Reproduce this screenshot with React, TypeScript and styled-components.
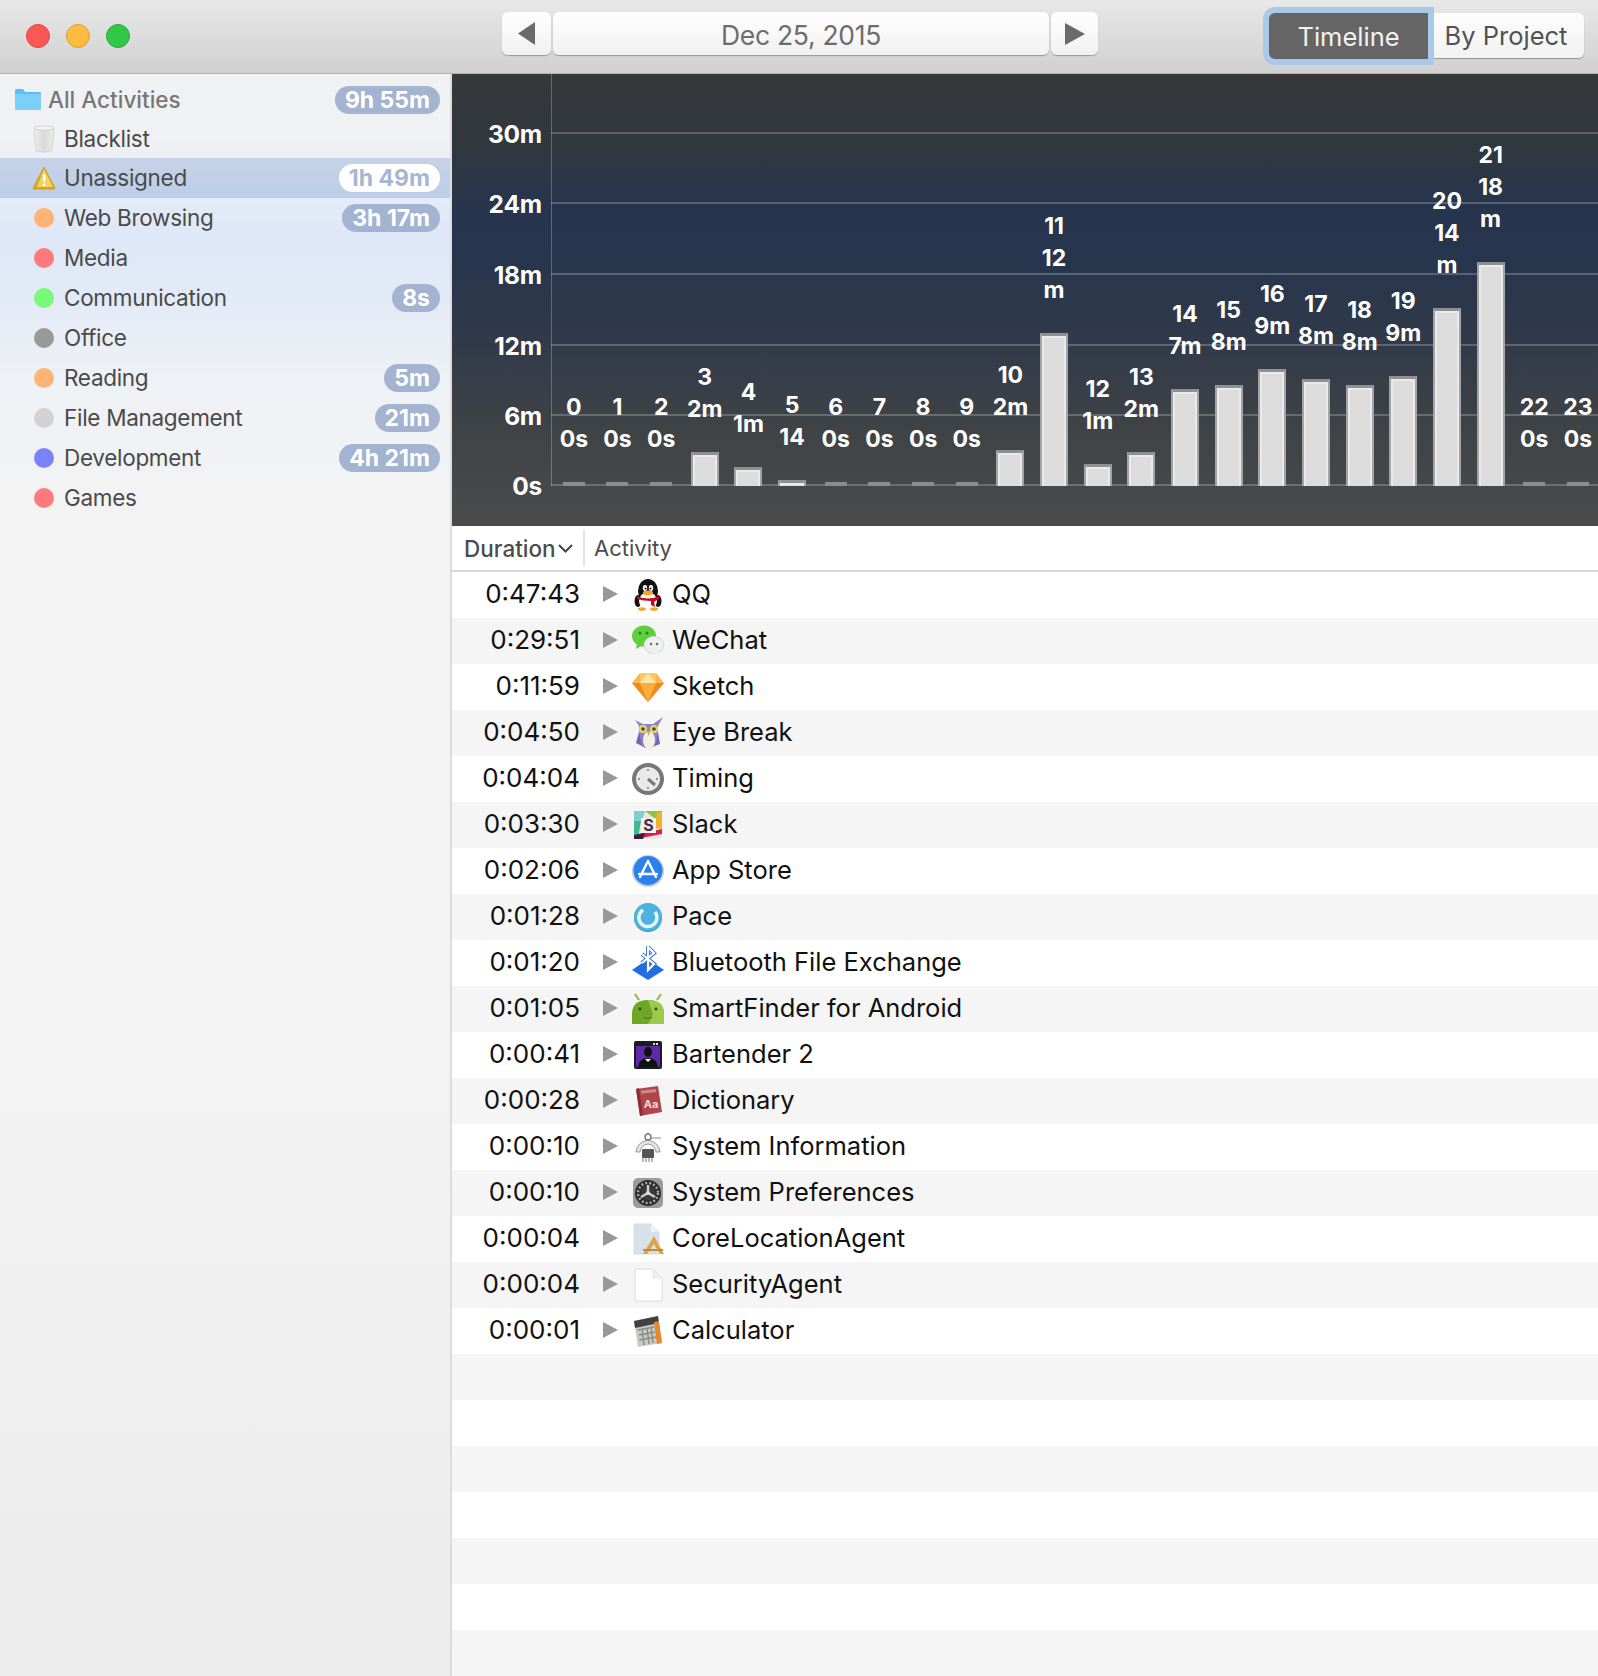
import React from "react";
import styled, { createGlobalStyle } from "styled-components";

const GlobalStyle = createGlobalStyle`
  html, body {
    margin: 0;
    padding: 0;
    background: #fff;
  }
  * {
    box-sizing: border-box;
  }
  body {
    font-family: Inter, "Liberation Sans", sans-serif;
    -webkit-font-smoothing: antialiased;
  }
`;

const Window = styled.div`
  width: 1598px;
  height: 1676px;
  display: flex;
  flex-direction: column;
  overflow: hidden;
`;

const TitleBar = styled.div`
  height: 74px;
  flex: none;
  display: grid;
  grid-template-columns: 502px 596px 1fr;
  align-items: start;
  background: linear-gradient(#e9e8e9, #d1d0d1);
  border-bottom: 1px solid #b4b4b4;
`;

const Lights = styled.div`
  display: flex;
  gap: 16px;
  padding: 24px 0 0 26px;
`;

const Light = styled.div<{ $color: string; $edge: string }>`
  width: 24px;
  height: 24px;
  border-radius: 50%;
  background: ${(p) => p.$color};
  border: 1px solid ${(p) => p.$edge};
`;

const Pager = styled.div`
  display: grid;
  grid-template-columns: 49px 1fr 47px;
  gap: 2px;
  padding-top: 12px;
`;

const PagerButton = styled.div`
  height: 43px;
  display: flex;
  align-items: center;
  justify-content: center;
  background: linear-gradient(#ffffff, #f1f1f1);
  border-radius: 6px;
  box-shadow: 0 1px 1px rgba(0, 0, 0, 0.3);
`;

const DateText = styled.div`
  margin-top: 2px;
  color: #6d6d6d;
  font-size: 26.5px;
  letter-spacing: -0.3px;
`;

const Segments = styled.div`
  display: flex;
  justify-content: flex-end;
  padding: 13px 14px 0 0;
`;

const SegmentOn = styled.div`
  width: 159px;
  height: 46px;
  display: flex;
  align-items: center;
  justify-content: center;
  background: #656565;
  color: #f2f2f2;
  font-size: 25.5px;
  border-radius: 6px 0 0 6px;
  box-shadow: 0 0 0 6px #aac8ea;
  position: relative;
  z-index: 1;
`;

const SegmentOff = styled.div`
  width: 156px;
  height: 45px;
  display: flex;
  align-items: center;
  justify-content: center;
  background: linear-gradient(#fdfdfd, #f2f2f2);
  color: #525252;
  font-size: 25.5px;
  border-radius: 0 6px 6px 0;
  box-shadow: 0 1px 1px rgba(0, 0, 0, 0.3);
`;

const Body = styled.div`
  flex: 1;
  display: flex;
  min-height: 0;
`;

const Sidebar = styled.div`
  width: 452px;
  flex: none;
  padding-top: 6px;
  border-right: 2px solid #dcdcdc;
  background: linear-gradient(
    #f1f1f2 0%,
    #eff1f4 4%,
    #dfe8f8 10%,
    #e3eaf7 14%,
    #e9eef6 16.5%,
    #eef1f5 19%,
    #f1f2f4 24%,
    #f3f3f3 27%,
    #f3f3f3 60%,
    #ececec 100%
  );
`;

const SideRow = styled.div<{ $selected?: boolean; $top?: boolean; $short?: boolean }>`
  height: ${(p) => (p.$short ? "38px" : "40px")};
  display: flex;
  align-items: center;
  padding: 0 10px 0 ${(p) => (p.$top ? "14px" : "32px")};
  background: ${(p) => (p.$selected ? "linear-gradient(#c6d2e6, #bccee9)" : "transparent")};
`;

const SideIcon = styled.div<{ $top?: boolean }>`
  width: ${(p) => (p.$top ? "34px" : "32px")};
  flex: none;
  display: flex;
  align-items: center;
  justify-content: flex-start;
`;

const Dot = styled.div<{ $color: string }>`
  width: 20px;
  height: 20px;
  margin-left: 2px;
  border-radius: 50%;
  background: ${(p) => p.$color};
`;

const SideLabel = styled.div<{ $muted?: boolean }>`
  flex: 1;
  margin-top: -1px;
  font-size: 22.5px;
  letter-spacing: ${(p) => (p.$muted ? "0" : "-0.3px")};
  font-weight: ${(p) => (p.$muted ? 500 : 400)};
  color: ${(p) => (p.$muted ? "#777777" : "#4a4a4a")};
`;

const Badge = styled.div<{ $inverse?: boolean }>`
  height: 28px;
  padding: 0 10px;
  display: flex;
  align-items: center;
  border-radius: 14px;
  font-size: 23px;
  font-weight: 700;
  color: ${(p) => (p.$inverse ? "#a6b6d3" : "#fff")};
  background: ${(p) => (p.$inverse ? "#fff" : "#a4b3d0")};
`;

const Main = styled.div`
  flex: 1;
  min-width: 0;
  display: flex;
  flex-direction: column;
`;

const Chart = styled.div`
  height: 452px;
  flex: none;
  padding: 0 0 40px 99px;
  display: flex;
  background: linear-gradient(
    #363839 0%,
    #30373f 16%,
    #26344e 31%,
    #27354d 42%,
    #323a4a 60%,
    #3f4346 78%,
    #4a4a4a 100%
  );
`;

const Plot = styled.div`
  flex: 1;
  position: relative;
  display: grid;
  grid-template-columns: repeat(24, 43.66px);
  align-items: end;
  border-left: 1px solid rgba(255, 255, 255, 0.25);
`;

const GridLine = styled.div<{ $y: number }>`
  position: absolute;
  left: -1px;
  right: 0;
  bottom: ${(p) => p.$y}px;
  height: 2px;
  background: rgba(255, 255, 255, 0.22);
`;

const AxisLabel = styled.div`
  position: absolute;
  top: -13px;
  right: 100%;
  width: 80px;
  margin-right: 9px;
  text-align: right;
  color: #fff;
  font-size: 24.5px;
  font-weight: 700;
  letter-spacing: -0.2px;
  line-height: 30px;
`;

const Column = styled.div`
  position: relative;
  display: flex;
  flex-direction: column;
  align-items: center;
`;

const BarLabel = styled.div`
  width: 100%;
  margin-bottom: 27px;
  text-align: center;
  color: #fff;
  font-size: 23px;
  font-weight: 700;
  line-height: 32px;
`;

const LabelLine = styled.div`
  word-break: break-all;
`;

const Bar = styled.div<{ $empty: boolean }>`
  width: ${(p) => (p.$empty ? "22px" : "28px")};
  background: ${(p) => (p.$empty ? "#8c8d8e" : "#dcdcdc")};
  ${(p) =>
    !p.$empty &&
    `
    border-top: 3px solid #8f9091;
    border-left: 2px solid #a3a4a5;
    border-right: 2px solid #a3a4a5;
    box-shadow: inset 2px 2px 0 #eaeaea, inset -2px 0 0 #eaeaea;
  `}
`;

const HeaderRow = styled.div`
  height: 46px;
  flex: none;
  display: flex;
  align-items: center;
  background: #fff;
  border-bottom: 2px solid #d8d8d8;
  color: #4c4c4c;
  font-size: 22px;
`;

const DurationHead = styled.div`
  width: 133px;
  height: 36px;
  padding-left: 12px;
  display: flex;
  align-items: center;
  gap: 2px;
  border-right: 2px solid #e4e4e4;
  font-size: 22.5px;
  font-weight: 500;
`;

const ActivityHead = styled.div`
  padding-left: 9px;
`;

const List = styled.div`
  flex: 1;
  min-height: 0;
`;

const Row = styled.div<{ $alt: boolean }>`
  height: 46px;
  display: flex;
  align-items: center;
  background: ${(p) => (p.$alt ? "#f5f5f5" : "#fff")};
  color: #111;
  font-size: 25.5px;
`;

const Duration = styled.div`
  width: 128px;
  text-align: right;
  margin-top: -4px;
  font-size: 26px;
`;

const Disclosure = styled.div`
  width: 0;
  height: 0;
  margin: -3px 0 0 23px;
  border-left: 15px solid #999;
  border-top: 8px solid transparent;
  border-bottom: 8px solid transparent;
`;

const AppIcon = styled.div`
  width: 34px;
  height: 34px;
  margin-left: 13px;
  flex: none;
`;

const AppName = styled.div`
  margin: -3px 0 0 7px;
`;

const Svg: React.FC<{ children: React.ReactNode }> = ({ children }) => (
  <svg width="34" height="34" viewBox="0 0 34 34" style={{ display: "block" }}>
    {children}
  </svg>
);

const QQIcon = () => (
  <Svg>
    <ellipse cx="17" cy="13" rx="10" ry="12" fill="#111" />
    <ellipse cx="7" cy="23" rx="3.5" ry="6" fill="#111" />
    <ellipse cx="27" cy="23" rx="3.5" ry="6" fill="#111" />
    <ellipse cx="17" cy="23" rx="9" ry="9" fill="#fff" />
    <ellipse cx="14" cy="10" rx="2.2" ry="3" fill="#fff" />
    <ellipse cx="20" cy="10" rx="2.2" ry="3" fill="#fff" />
    <circle cx="14.5" cy="10.5" r="1" fill="#111" />
    <circle cx="19.5" cy="10.5" r="1" fill="#111" />
    <ellipse cx="17" cy="15" rx="5" ry="2.4" fill="#f5a623" />
    <path d="M6 18 Q17 23 28 18 L28 21 Q24 23 23 24 L24 29 L20 27 L20 23 Q12 23 6 21 Z" fill="#d0021b" />
    <ellipse cx="11" cy="31" rx="4" ry="1.8" fill="#f5a623" />
    <ellipse cx="23" cy="31" rx="4" ry="1.8" fill="#f5a623" />
  </Svg>
);

const WeChatIcon = () => (
  <Svg>
    <ellipse cx="13" cy="12" rx="12" ry="10.5" fill="#5fcf3c" />
    <path d="M6 19 L5 25 L12 21 Z" fill="#5fcf3c" />
    <circle cx="9" cy="9" r="1.5" fill="#2e7f1c" />
    <circle cx="16" cy="9" r="1.5" fill="#2e7f1c" />
    <ellipse cx="23" cy="21" rx="10" ry="8.5" fill="#eef0f0" stroke="#d5d8d8" />
    <path d="M27 27 L30 32 L22 29 Z" fill="#eef0f0" />
    <circle cx="20" cy="20" r="1.2" fill="#666" />
    <circle cx="26" cy="20" r="1.2" fill="#666" />
  </Svg>
);

const SketchIcon = () => (
  <Svg>
    <path d="M9 3 H25 L33 13 L17 32 L1 13 Z" fill="#fdb84a" />
    <path d="M1 13 H33 L17 32 Z" fill="#ee8a1f" />
    <path d="M9 13 H25 L17 32 Z" fill="#fbae3a" />
    <path d="M9 3 L9 13 H25 L25 3 Z" fill="#fdc65e" />
    <path d="M17 3 L9 13 H25 Z" fill="#fee3a6" />
  </Svg>
);

const OwlIcon = () => (
  <Svg>
    <path d="M4 4 L12 8 H22 L32 1 L27 10 L27 26 Q24 32 17 32 Q10 32 8 26 L8 10 Z" fill="#8c86c9" />
    <ellipse cx="18" cy="24" rx="6" ry="9" fill="#f2efe6" />
    <circle cx="12" cy="13" r="4" fill="#e8d26a" />
    <circle cx="23" cy="13" r="4" fill="#e8d26a" />
    <circle cx="12" cy="13" r="1.8" fill="#444" />
    <circle cx="23" cy="13" r="1.8" fill="#444" />
    <path d="M16 15 L19 15 L17.5 20 Z" fill="#e0a030" />
    <path d="M8 16 L5 27 L11 30 Z" fill="#6e68b5" />
    <path d="M27 16 L29 28 L24 30 Z" fill="#6e68b5" />
  </Svg>
);

const TimingIcon = () => (
  <Svg>
    <circle cx="17" cy="17" r="16" fill="#777777" />
    <circle cx="17" cy="17" r="12" fill="#e9e9e9" />
    <circle cx="17" cy="8" r="1" fill="#777" />
    <circle cx="8" cy="17" r="1" fill="#777" />
    <circle cx="26" cy="17" r="1" fill="#777" />
    <circle cx="17" cy="26" r="1" fill="#777" />
    <path d="M17 17 L24 23" stroke="#777" strokeWidth="3" />
  </Svg>
);

const SlackIcon = () => (
  <Svg>
    <rect x="3" y="3" width="28" height="28" rx="2" fill="#e8e8e0" />
    <path d="M3 3 H14 L11 13 H3 Z" fill="#7fd0cc" />
    <path d="M14 3 H31 V11 L26 12 Z" fill="#8cc63f" />
    <path d="M26 4 H31 V21 L24 20 Z" fill="#edb431" />
    <path d="M3 13 H10 L7 31 H3 Z" fill="#3eb890" />
    <path d="M7 26 L31 21 V26 L5 31 Z" fill="#d81c5c" />
    <path d="M3 27 L14 25 L12 31 H3 Z" fill="#3d1c3c" />
    <rect x="10" y="10" width="15" height="15" fill="#f4f1ea" />
    <text x="17.5" y="23" textAnchor="middle" fontSize="16" fontWeight="700" fill="#4a2b4a" fontFamily="Inter, sans-serif">S</text>
  </Svg>
);

const AppStoreIcon = () => (
  <Svg>
    <circle cx="17" cy="17" r="16" fill="#c9ccd0" />
    <circle cx="17" cy="16.5" r="14.5" fill="#2a80ee" />
    <path d="M17 7 L9 23 M17 7 L25 23 M8 20 H26" stroke="#fff" strokeWidth="2.4" fill="none" strokeLinecap="round" />
  </Svg>
);

const PaceIcon = () => (
  <Svg>
    <circle cx="17" cy="18" r="14" fill="#2e97c6" />
    <circle cx="17" cy="17" r="14" fill="#4db2dc" />
    <path d="M12 10 A9 9 0 1 0 24 12" stroke="#e4f5fb" strokeWidth="3.5" fill="none" />
  </Svg>
);

const BluetoothIcon = () => (
  <Svg>
    <path d="M1 24 L17 13 L33 24 L17 34 Z" fill="#1f6fe0" />
    <path d="M11 8 L23 18 L17 24 V1 L23 7 L11 17" stroke="#2a6fd6" strokeWidth="4" fill="none" />
    <path d="M11 8 L23 18 L17 24 V1 L23 7 L11 17" stroke="#fff" strokeWidth="2.2" fill="none" />
  </Svg>
);

const AndroidIcon = () => (
  <Svg>
    <path d="M8 8 L4 2 M26 8 L30 2" stroke="#8fb93a" strokeWidth="2" />
    <path d="M1 32 V22 Q1 8 17 8 Q33 8 33 22 V32 Z" fill="#6fa626" />
    <path d="M17 8 Q33 8 33 22 V32 H17 L22 22 Z" fill="#9bc94c" />
    <circle cx="9" cy="17" r="1.4" fill="#2d4a10" />
    <circle cx="25" cy="17" r="1.4" fill="#2d4a10" />
    <path d="M13 25 Q17 28 21 25" stroke="#4c7d18" strokeWidth="1.2" fill="none" />
  </Svg>
);

const BartenderIcon = () => (
  <Svg>
    <rect x="3" y="3" width="28" height="28" rx="2" fill="#1c1c1e" />
    <rect x="5" y="8" width="24" height="21" fill="#5d2aa8" />
    <rect x="22" y="5" width="2" height="2" fill="#ddd" />
    <rect x="25" y="5" width="2" height="2" fill="#ddd" />
    <ellipse cx="17" cy="14" rx="4" ry="5" fill="#111" />
    <path d="M7 29 Q8 20 17 20 Q26 20 27 29 Z" fill="#111" />
    <path d="M14 21 L17 24 L20 21 Z" fill="#fff" />
  </Svg>
);

const DictionaryIcon = () => (
  <Svg>
    <path d="M5 5 L27 2 L31 28 L9 32 Z" fill="#b0464c" />
    <path d="M5 5 L8 4 L12 31 L9 32 Z" fill="#8c2f35" />
    <rect x="10" y="6" width="15" height="3" fill="#cf8a8c" transform="rotate(-7 17 7)" />
    <text x="20" y="24" textAnchor="middle" fontSize="11" fontWeight="700" fill="#efd9d9" fontFamily="Inter, sans-serif">Aa</text>
  </Svg>
);

const SysInfoIcon = () => (
  <Svg>
    <path d="M5 22 Q6 12 17 10 Q28 12 29 22 L25 22 Q24 15 17 14 Q10 15 9 22 Z" fill="#e2e2e2" stroke="#888" strokeWidth="0.8" />
    <circle cx="17" cy="7" r="3" fill="none" stroke="#777" strokeWidth="1.4" />
    <path d="M17 2 V5 M20 8 H30" stroke="#888" strokeWidth="1" />
    <rect x="11" y="19" width="12" height="9" rx="1" fill="#555" />
    <path d="M12 28 V32 M15 28 V32 M18 28 V32 M21 28 V32" stroke="#777" strokeWidth="1" />
  </Svg>
);

const SysPrefIcon = () => (
  <Svg>
    <rect x="2" y="2" width="30" height="30" rx="5" fill="#9a9a9a" />
    <circle cx="17" cy="17" r="13" fill="#2a2a2a" />
    <circle cx="17" cy="17" r="10" fill="none" stroke="#aaa" strokeWidth="2.5" strokeDasharray="2 2" />
    <circle cx="17" cy="17" r="7.5" fill="#3a3a3a" />
    <path d="M17 17 L17 9 M17 17 L24 21 M17 17 L10 21" stroke="#d0d0d0" strokeWidth="2.4" />
    <circle cx="17" cy="17" r="2" fill="#ddd" />
  </Svg>
);

const CoreLocationIcon = () => (
  <Svg>
    <path d="M3 2 H20 L28 10 V32 H3 Z" fill="#d5e2ec" stroke="#d9d9d9" />
    <path d="M20 2 L28 10 H20 Z" fill="#f1f1f1" />
    <path d="M12 32 L23 14 L33 32 L29 32 L23 22 L16 32 Z" fill="#d9a441" />
    <path d="M12 28 H32" stroke="#c68b2c" strokeWidth="2" />
  </Svg>
);

const DocIcon = () => (
  <Svg>
    <path d="M4 1 H22 L31 10 V33 H4 Z" fill="#fff" stroke="#dcdcdc" />
    <path d="M22 1 L31 10 H22 Z" fill="#efefef" stroke="#dcdcdc" strokeWidth="0.6" />
  </Svg>
);

const CalculatorIcon = () => (
  <Svg>
    <path d="M3 7 L27 2 L31 29 L7 33 Z" fill="#c9c9c4" />
    <path d="M3 7 L27 2 L28 9 L4 14 Z" fill="#3e4042" />
    <path d="M23 8 L28 7 L31 29 L26 30 Z" fill="#e28a2d" />
    <path d="M7 16 L23 13 M8 21 L24 18 M8.5 26 L25 23 M11 15 L13 31 M16 14 L18 30 M20 13 L22 29" stroke="#8b8b86" strokeWidth="1.4" />
  </Svg>
);

const FolderIcon = () => (
  <svg width="28" height="22" viewBox="0 0 28 22" style={{ display: "block" }}>
    <path d="M1 2 Q1 0 3 0 H9 L11 3 H26 Q27 3 27 4 V20 Q27 21 26 21 H2 Q1 21 1 20 Z" fill="#5cbdf0" />
    <path d="M1 5 H27 V20 Q27 21 26 21 H2 Q1 21 1 20 Z" fill="#7cd0f8" />
  </svg>
);

const TrashIcon = () => (
  <svg width="24" height="28" viewBox="0 0 24 28" style={{ display: "block" }}>
    <defs>
      <linearGradient id="glass" x1="0" y1="0" x2="1" y2="0">
        <stop offset="0" stopColor="#eeeeee" />
        <stop offset="0.5" stopColor="#d8d8d8" />
        <stop offset="1" stopColor="#ececec" />
      </linearGradient>
    </defs>
    <path d="M2 3 H22 L20 26 Q12 28 4 26 Z" fill="url(#glass)" stroke="#d6d6d6" />
    <ellipse cx="12" cy="3" rx="10" ry="2" fill="#f6f6f6" stroke="#d0d0d0" />
  </svg>
);

const WarningIcon = () => (
  <svg width="24" height="24" viewBox="0 0 24 24" style={{ display: "block" }}>
    <path d="M12 1 L23 22 Q23 23 22 23 H2 Q1 23 1 22 Z" fill="#dca81f" stroke="#c79a1c" strokeWidth="0.8" />
    <path d="M12 3 L21 21 H5 Z" fill="#f3d261" />
    <rect x="11" y="8" width="2.4" height="8" rx="1" fill="#fff" />
    <circle cx="12.2" cy="18.8" r="1.5" fill="#fff" />
  </svg>
);

const SIDE_ITEMS = [
  { name: "Web Browsing", color: "#ffb375", time: "3h 17m" },
  { name: "Media", color: "#ff7a7a" },
  { name: "Communication", color: "#79f879", time: "8s" },
  { name: "Office", color: "#999999" },
  { name: "Reading", color: "#ffb375", time: "5m" },
  { name: "File Management", color: "#d2d2d2", time: "21m" },
  { name: "Development", color: "#7b83fb", time: "4h 21m" },
  { name: "Games", color: "#ff7a7a" },
];

const HOURS: { label: string; height: number }[] = [
  { label: "0s", height: 4 },
  { label: "0s", height: 4 },
  { label: "0s", height: 4 },
  { label: "2m", height: 34 },
  { label: "1m", height: 19 },
  { label: "14", height: 6 },
  { label: "0s", height: 4 },
  { label: "0s", height: 4 },
  { label: "0s", height: 4 },
  { label: "0s", height: 4 },
  { label: "2m", height: 36 },
  { label: "12m", height: 153 },
  { label: "1m", height: 22 },
  { label: "2m", height: 34 },
  { label: "7m", height: 97 },
  { label: "8m", height: 101 },
  { label: "9m", height: 117 },
  { label: "8m", height: 107 },
  { label: "8m", height: 101 },
  { label: "9m", height: 110 },
  { label: "14m", height: 178 },
  { label: "18m", height: 224 },
  { label: "0s", height: 4 },
  { label: "0s", height: 4 },
];

const AXIS = [
  { label: "0s", y: 0 },
  { label: "6m", y: 70.5 },
  { label: "12m", y: 140.5 },
  { label: "18m", y: 211 },
  { label: "24m", y: 282 },
  { label: "30m", y: 352 },
];

const APPS: { time: string; name: string; icon: React.ReactNode }[] = [
  { time: "0:47:43", name: "QQ", icon: <QQIcon /> },
  { time: "0:29:51", name: "WeChat", icon: <WeChatIcon /> },
  { time: "0:11:59", name: "Sketch", icon: <SketchIcon /> },
  { time: "0:04:50", name: "Eye Break", icon: <OwlIcon /> },
  { time: "0:04:04", name: "Timing", icon: <TimingIcon /> },
  { time: "0:03:30", name: "Slack", icon: <SlackIcon /> },
  { time: "0:02:06", name: "App Store", icon: <AppStoreIcon /> },
  { time: "0:01:28", name: "Pace", icon: <PaceIcon /> },
  { time: "0:01:20", name: "Bluetooth File Exchange", icon: <BluetoothIcon /> },
  { time: "0:01:05", name: "SmartFinder for Android", icon: <AndroidIcon /> },
  { time: "0:00:41", name: "Bartender 2", icon: <BartenderIcon /> },
  { time: "0:00:28", name: "Dictionary", icon: <DictionaryIcon /> },
  { time: "0:00:10", name: "System Information", icon: <SysInfoIcon /> },
  { time: "0:00:10", name: "System Preferences", icon: <SysPrefIcon /> },
  { time: "0:00:04", name: "CoreLocationAgent", icon: <CoreLocationIcon /> },
  { time: "0:00:04", name: "SecurityAgent", icon: <DocIcon /> },
  { time: "0:00:01", name: "Calculator", icon: <CalculatorIcon /> },
];

const EMPTY_ROWS = 7;

const App: React.FC = () => {
  return (
    <Window>
      <GlobalStyle />
      <TitleBar>
        <Lights>
          <Light $color="#fc5753" $edge="#df4744" />
          <Light $color="#fdbc40" $edge="#de9f34" />
          <Light $color="#33c748" $edge="#27aa35" />
        </Lights>
        <Pager>
          <PagerButton>
            <svg width="18" height="23" viewBox="0 0 18 23">
              <path d="M17 0 V23 L0 11.5 Z" fill="#6a6a6a" />
            </svg>
          </PagerButton>
          <PagerButton>
            <DateText>Dec 25, 2015</DateText>
          </PagerButton>
          <PagerButton>
            <svg width="20" height="22" viewBox="0 0 20 22">
              <path d="M0 0 V22 L20 11 Z" fill="#6a6a6a" />
            </svg>
          </PagerButton>
        </Pager>
        <Segments>
          <SegmentOn>Timeline</SegmentOn>
          <SegmentOff>By Project</SegmentOff>
        </Segments>
      </TitleBar>
      <Body>
        <Sidebar>
          <SideRow $top>
            <SideIcon $top>
              <FolderIcon />
            </SideIcon>
            <SideLabel $muted>All Activities</SideLabel>
            <Badge>9h 55m</Badge>
          </SideRow>
          <SideRow $short>
            <SideIcon>
              <TrashIcon />
            </SideIcon>
            <SideLabel>Blacklist</SideLabel>
          </SideRow>
          <SideRow $selected>
            <SideIcon>
              <WarningIcon />
            </SideIcon>
            <SideLabel>Unassigned</SideLabel>
            <Badge $inverse>1h 49m</Badge>
          </SideRow>
          {SIDE_ITEMS.map((item) => (
            <SideRow key={item.name}>
              <SideIcon>
                <Dot $color={item.color} />
              </SideIcon>
              <SideLabel>{item.name}</SideLabel>
              {item.time && <Badge>{item.time}</Badge>}
            </SideRow>
          ))}
        </Sidebar>
        <Main>
          <Chart>
            <Plot>
              {AXIS.map((a) => (
                <GridLine key={a.label} $y={a.y}>
                  <AxisLabel>{a.label}</AxisLabel>
                </GridLine>
              ))}
              {HOURS.map((h, i) => (
                <Column key={i}>
                  <BarLabel>
                    <LabelLine>{i}</LabelLine>
                    <LabelLine>{h.label}</LabelLine>
                  </BarLabel>
                  <Bar $empty={h.height <= 4} style={{ height: h.height }} />
                </Column>
              ))}
            </Plot>
          </Chart>
          <HeaderRow>
            <DurationHead>
              Duration
              <svg width="15" height="9" viewBox="0 0 15 9">
                <path d="M1 1 L7.5 7.5 L14 1" stroke="#444" strokeWidth="2" fill="none" />
              </svg>
            </DurationHead>
            <ActivityHead>Activity</ActivityHead>
          </HeaderRow>
          <List>
            {APPS.map((app, i) => (
              <Row key={app.name} $alt={i % 2 === 1}>
                <Duration>{app.time}</Duration>
                <Disclosure />
                <AppIcon>{app.icon}</AppIcon>
                <AppName>{app.name}</AppName>
              </Row>
            ))}
            {Array.from({ length: EMPTY_ROWS }).map((_, i) => (
              <Row key={i} $alt={(APPS.length + i) % 2 === 1} />
            ))}
          </List>
        </Main>
      </Body>
    </Window>
  );
};

export default App;
